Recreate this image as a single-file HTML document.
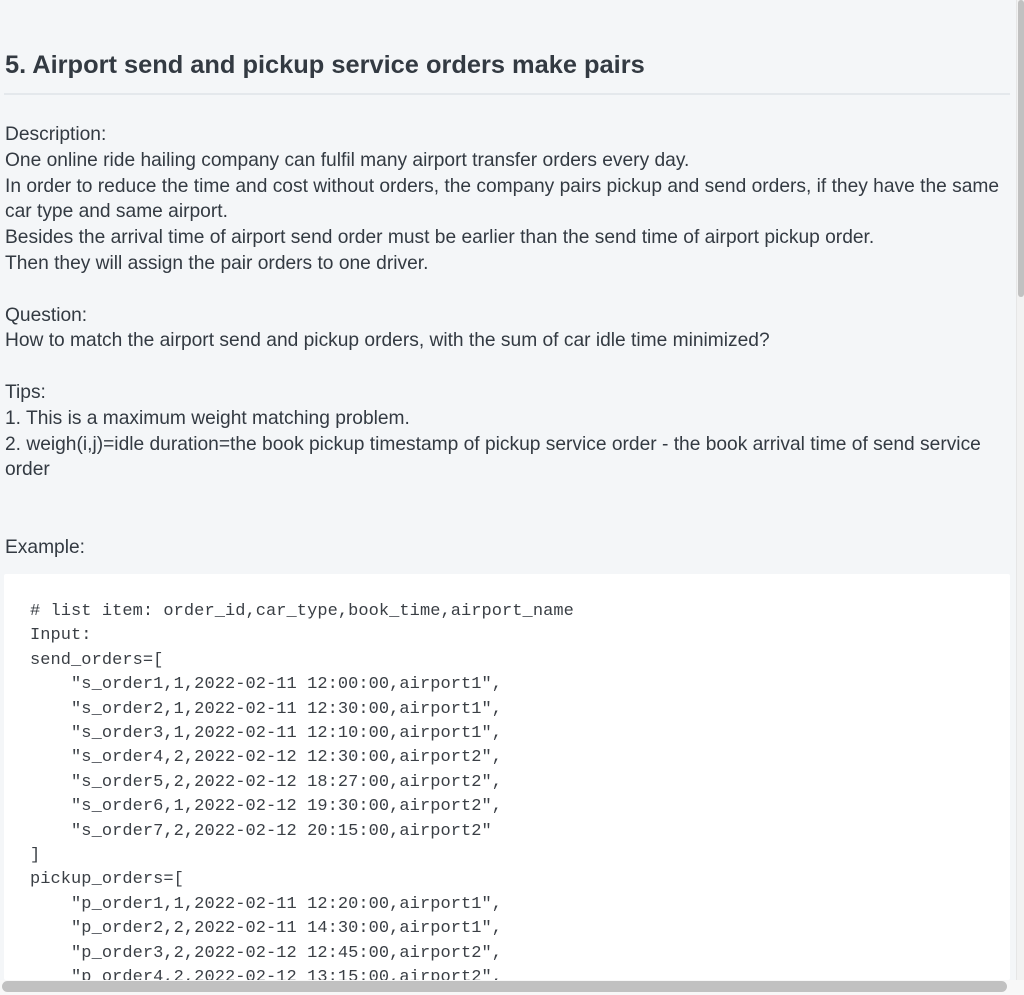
<!DOCTYPE html>
<html><head><meta charset="utf-8"><style>
html,body{margin:0;padding:0;}
body{width:1024px;height:995px;overflow:hidden;background:#f4f6f8;position:relative;font-family:"Liberation Sans",sans-serif;color:#333a42;}
#main{position:absolute;left:0;top:0;width:1016px;height:980px;overflow:hidden;}
h1{position:absolute;left:5px;top:51px;margin:0;font-size:25.4px;font-weight:bold;color:#333a42;white-space:nowrap;}
.hr{position:absolute;left:4px;top:93px;width:1006px;height:2px;background:#e4e8ec;}
.txt{position:absolute;left:5px;top:122px;width:1011px;font-size:19.2px;line-height:25.8px;}
.txt p{margin:0;}
.code{position:absolute;left:4px;top:574px;width:1006px;height:406px;background:#fff;border-radius:2px;}
pre{margin:0;position:absolute;left:26px;top:26px;font-family:"Liberation Mono",monospace;font-size:17px;line-height:24.4px;letter-spacing:0.06px;color:#3a3f45;}
.vs{position:absolute;left:1016px;top:0;width:8px;height:980px;background:#f2f2f2;border-left:1px solid #e6e6e6;}
.vt{position:absolute;left:1018px;top:0;width:6px;height:297px;background:#c1c1c1;border-radius:3px;}
.hs{position:absolute;left:0;top:980px;width:1024px;height:15px;background:#f8f8f8;}
.ht{position:absolute;left:2px;top:981px;width:1005px;height:11px;background:#c1c1c1;border-radius:6px;}
</style></head><body>
<div id="main">
<h1>5. Airport send and pickup service orders make pairs</h1>
<div class="hr"></div>
<div class="txt">
<p>Description:</p>
<p>One online ride hailing company can fulfil many airport transfer orders every day.</p>
<p>In order to reduce the time and cost without orders, the company pairs pickup and send orders, if they have the same<br>car type and same airport.</p>
<p>Besides the arrival time of airport send order must be earlier than the send time of airport pickup order.</p>
<p>Then they will assign the pair orders to one driver.</p>
<p>&nbsp;</p>
<p>Question:</p>
<p>How to match the airport send and pickup orders, with the sum of car idle time minimized?</p>
<p>&nbsp;</p>
<p>Tips:</p>
<p>1. This is a maximum weight matching problem.</p>
<p>2. weigh(i,j)=idle duration=the book pickup timestamp of pickup service order - the book arrival time of send service<br>order</p>
<p>&nbsp;</p>
<p>&nbsp;</p>
<p>Example:</p>
</div>
<div class="code"><pre># list item: order_id,car_type,book_time,airport_name
Input:
send_orders=[
    "s_order1,1,2022-02-11 12:00:00,airport1",
    "s_order2,1,2022-02-11 12:30:00,airport1",
    "s_order3,1,2022-02-11 12:10:00,airport1",
    "s_order4,2,2022-02-12 12:30:00,airport2",
    "s_order5,2,2022-02-12 18:27:00,airport2",
    "s_order6,1,2022-02-12 19:30:00,airport2",
    "s_order7,2,2022-02-12 20:15:00,airport2"
]
pickup_orders=[
    "p_order1,1,2022-02-11 12:20:00,airport1",
    "p_order2,2,2022-02-11 14:30:00,airport1",
    "p_order3,2,2022-02-12 12:45:00,airport2",
    "p_order4,2,2022-02-12 13:15:00,airport2",
</pre></div>
</div>
<div class="vs"></div><div class="vt"></div>
<div class="hs"></div><div class="ht"></div>
</body></html>
